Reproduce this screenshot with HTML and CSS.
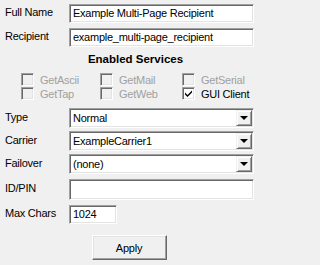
FILE: index.html
```html
<!DOCTYPE html>
<html>
<head>
<meta charset="utf-8">
<link rel="stylesheet" href="styles.css">
</head>
<body>
<div class="form">
  <div class="row"><span class="lbl">Full Name</span><div class="edit">Example Multi-Page Recipient</div></div>
  <div class="row"><span class="lbl">Recipient</span><div class="edit">example_multi-page_recipient</div></div>
  <div class="heading">Enabled Services</div>
  <div class="services">
    <div class="cb dis"><span class="box"></span><span>GetAscii</span></div>
    <div class="cb dis"><span class="box"></span><span>GetMail</span></div>
    <div class="cb dis"><span class="box"></span><span>GetSerial</span></div>
    <div class="cb dis"><span class="box"></span><span>GetTap</span></div>
    <div class="cb dis"><span class="box"></span><span>GetWeb</span></div>
    <div class="cb"><span class="box on"><svg width="9" height="9" viewBox="0 0 9 9"><path d="M1 3.5 L3.5 6 L8 1.5 L8 3.5 L3.5 8 L1 5.5 Z" fill="#000"/></svg></span><span>GUI Client</span></div>
  </div>
  <div class="combos">
    <div class="row crow"><span class="lbl">Type</span><div class="combo"><span class="val">Normal</span><span class="btn"><span class="arrow"></span></span></div></div>
    <div class="row crow"><span class="lbl">Carrier</span><div class="combo"><span class="val">ExampleCarrier1</span><span class="btn"><span class="arrow"></span></span></div></div>
    <div class="row crow"><span class="lbl">Failover</span><div class="combo"><span class="val">(none)</span><span class="btn"><span class="arrow"></span></span></div></div>
  </div>
  <div class="row idrow"><span class="lbl">ID/PIN</span><div class="edit tall"></div></div>
  <div class="row maxrow"><span class="lbl">Max Chars</span><div class="edit short">1024</div></div>
  <div class="actions"><button class="apply">Apply</button></div>
</div>
</body>
</html>
```

FILE: styles.css
```css
html, body {
  margin: 0;
  padding: 0;
  background: #f0f0f0;
}
body {
  width: 257px;
  height: 265px;
  overflow: hidden;
  font-family: "Liberation Sans", Arial, sans-serif;
  font-size: 11px;
  letter-spacing: -0.25px;
  color: #000;
}
.form {
  display: flex;
  flex-direction: column;
  padding-top: 4px;
}
.row {
  display: flex;
  align-items: center;
  height: 19px;
}
.row + .row { margin-top: 5px; }
.lbl {
  width: 64px;
  padding-left: 5px;
  flex: none;
  margin-top: -3px;
}
.edit {
  box-sizing: border-box;
  width: 185px;
  height: 19px;
  border: 1px solid;
  border-color: #a0a0a0 #ffffff #ffffff #a0a0a0;
  box-shadow: inset 1px 1px 0 #696969, inset -1px -1px 0 #e3e3e3;
  background: #fff;
  padding: 0 3px;
  line-height: 17px;
  white-space: nowrap;
  overflow: hidden;
}
.edit.tall { height: 21px; }
.edit.short { width: 48px; }
.heading {
  margin-top: 5px;
  margin-left: 14px;
  text-align: center;
  font-weight: bold;
  font-size: 11.5px;
  letter-spacing: 0;
  line-height: 14px;
}
.services {
  display: grid;
  grid-template-columns: 79px 82px auto;
  grid-auto-rows: 13px;
  row-gap: 1px;
  padding-left: 21px;
  margin-top: 7px;
}
.cb {
  display: flex;
  align-items: center;
  gap: 6px;
}
.cb.dis { color: #a0a0a0; }
.box {
  box-sizing: border-box;
  width: 13px;
  height: 13px;
  flex: none;
  border: 1px solid;
  border-color: #a0a0a0 #ffffff #ffffff #a0a0a0;
  box-shadow: inset 1px 1px 0 #696969, inset -1px -1px 0 #e3e3e3;
  background: #f0f0f0;
  display: flex;
  align-items: center;
  justify-content: center;
}
.box.on { background: #fff; }
.combos {
  display: flex;
  flex-direction: column;
  gap: 3px;
  margin-top: 8px;
}
.combos .row + .row { margin-top: 0; }
.crow { height: 20px; }
.combo {
  box-sizing: border-box;
  width: 185px;
  height: 20px;
  border: 1px solid;
  border-color: #a0a0a0 #ffffff #ffffff #a0a0a0;
  box-shadow: inset 1px 1px 0 #696969, inset -1px -1px 0 #e3e3e3;
  background: #fff;
  display: flex;
  align-items: stretch;
  padding: 1px;
}
.val {
  flex: 1;
  padding-left: 2px;
  line-height: 17px;
  white-space: nowrap;
}
.btn {
  box-sizing: border-box;
  width: 16px;
  flex: none;
  background: #f0f0f0;
  border: 1px solid;
  border-color: #f0f0f0 #696969 #696969 #f0f0f0;
  box-shadow: inset 1px 1px 0 #fff, inset -1px -1px 0 #a0a0a0;
  display: flex;
  align-items: center;
  justify-content: center;
}
.arrow {
  width: 0;
  height: 0;
  border-left: 4px solid transparent;
  border-right: 4px solid transparent;
  border-top: 4px solid #000;
}
.idrow { margin-top: 5px; height: 21px; }
.maxrow { margin-top: 7px; }
.actions {
  display: flex;
  justify-content: center;
  margin-top: 11px;
  padding-left: 1px;
}
.apply {
  box-sizing: border-box;
  width: 75px;
  height: 25px;
  background: #f0f0f0;
  border: 1px solid;
  border-color: #ffffff #696969 #696969 #ffffff;
  box-shadow: inset -1px -1px 0 #a0a0a0, inset 1px 1px 0 #e3e3e3;
  font-family: "Liberation Sans", Arial, sans-serif;
  font-size: 11px;
  letter-spacing: -0.25px;
  color: #000;
  padding: 0;
}
```
